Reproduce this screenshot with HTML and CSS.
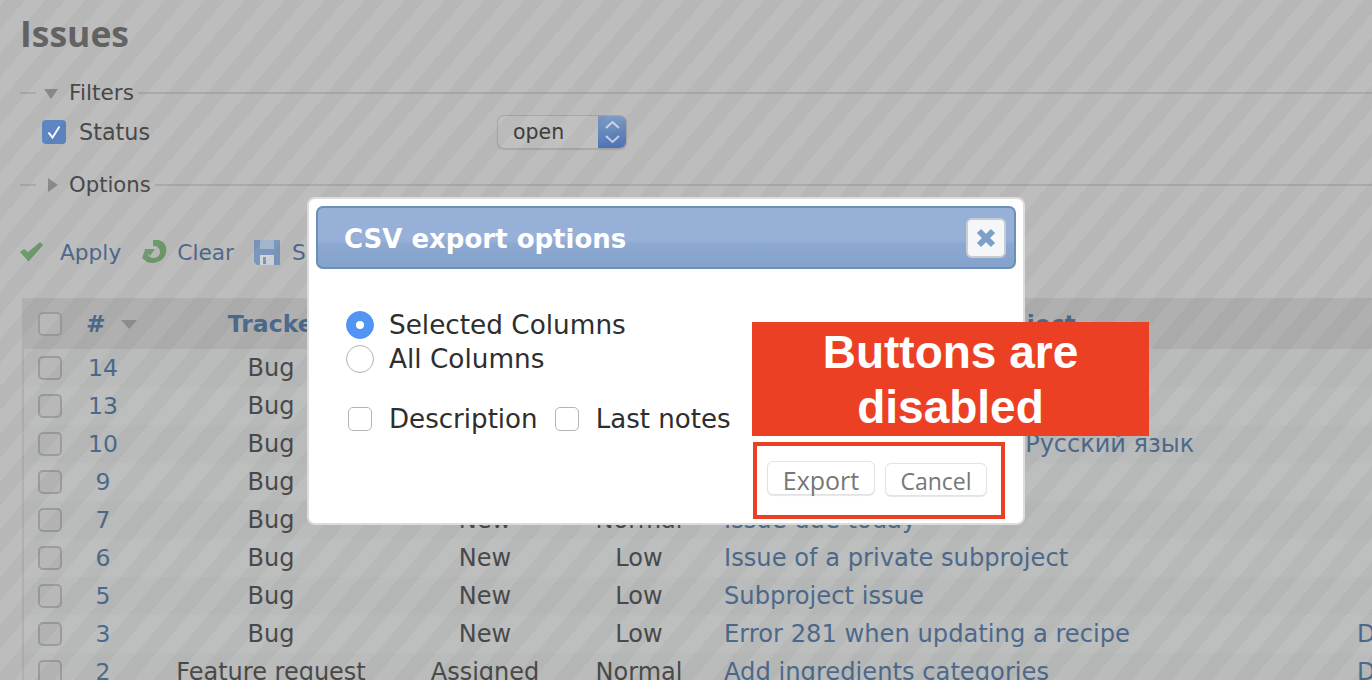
FILE: index.html
```html
<!DOCTYPE html>
<html lang="en">
<head>
<meta charset="utf-8">
<title>Issues</title>
<link rel="stylesheet" href="styles.css">
</head>
<body>
<main class="page">
  <h1 class="title">Issues</h1>
  <section class="fieldset filters">
    <div class="legend"><span class="arrow-down"></span><span>Filters</span></div>
    <div class="filter-row">
      <span class="check-on"><svg viewBox="0 0 24 24" width="24" height="24"><path d="M6.5 12.5l4 5 7-11" fill="none" stroke="#fff" stroke-width="2"/></svg></span>
      <span class="filter-name">Status</span>
      <span class="select"><span class="select-text">open</span><span class="select-btn"><svg viewBox="0 0 29 34" width="29" height="34"><path d="M8 13l6.500-6 6.500 6M8 21l6.500 6 6.500-6" fill="none" stroke="#c9d4e6" stroke-width="2"/></svg></span></span>
    </div>
  </section>
  <section class="fieldset options">
    <div class="legend"><span class="arrow-right"></span><span class="options-label">Options</span></div>
  </section>
  <nav class="actions">
    <span class="action"><svg class="ic-apply" viewBox="0 0 24 20" width="24" height="20"><path d="M0 10l4-3 4 3L20 0l3 3-14 16h-1z" fill="#6e9a6c"/></svg><a>Apply</a></span>
    <span class="action"><svg class="ic-clear" viewBox="0 0 26 26" width="26" height="26"><path d="M12 1h6c7 2 8 9 7 13-2 8-11 12-19 9l-5-4 3-8 3 2c-1 3 2 6 5 6 4 0 7-2 7-6s-3-6-7-6z" fill="#6f9a6d"/><path d="M3 10h11l-5 7z" fill="#6f9a6d"/></svg><a>Clear</a></span>
    <span class="action"><svg class="ic-save" viewBox="0 0 26 26" width="26" height="26"><path d="M0 1h26v25H3l-3-3z" fill="#7c97bc"/><path d="M6 1h14v9H6z" fill="#a4b6ce"/><path d="M6 16h14v10H6z" fill="#d2d6da"/><path d="M9 18h3v7H9z" fill="#7c97bc"/></svg><a>Save</a></span>
  </nav>
  <table class="issues">
    <thead>
      <tr><th class="c-check"><span class="box"></span></th><th class="c-id"><a>#</a><span class="sort"></span></th><th class="c-tracker"><a>Tracker</a></th><th class="c-status"><a>Status</a></th><th class="c-prio"><a>Priority</a></th><th class="c-subject"><a>Subject</a></th><th class="c-user"></th></tr>
    </thead>
    <tbody>
      <tr><td class="c-check"><span class="box"></span></td><td class="c-id"><a>14</a></td><td class="c-tracker">Bug</td><td class="c-status">New</td><td class="c-prio">Normal</td><td class="c-subject"><a>Issue with a recipe</a></td><td class="c-user"></td></tr>
      <tr><td class="c-check"><span class="box"></span></td><td class="c-id"><a>13</a></td><td class="c-tracker">Bug</td><td class="c-status">New</td><td class="c-prio">Normal</td><td class="c-subject"><a>Subproject issue two</a></td><td class="c-user"></td></tr>
      <tr><td class="c-check"><span class="box"></span></td><td class="c-id"><a>10</a></td><td class="c-tracker">Bug</td><td class="c-status">New</td><td class="c-prio">Normal</td><td class="c-subject subject-ru"><a>Issue with the encoding: Русский язык</a></td><td class="c-user"></td></tr>
      <tr><td class="c-check"><span class="box"></span></td><td class="c-id"><a>9</a></td><td class="c-tracker">Bug</td><td class="c-status">New</td><td class="c-prio">Normal</td><td class="c-subject"><a>Blocked issue</a></td><td class="c-user"></td></tr>
      <tr><td class="c-check"><span class="box"></span></td><td class="c-id"><a>7</a></td><td class="c-tracker">Bug</td><td class="c-status">New</td><td class="c-prio">Normal</td><td class="c-subject"><a>Issue due today</a></td><td class="c-user"></td></tr>
      <tr><td class="c-check"><span class="box"></span></td><td class="c-id"><a>6</a></td><td class="c-tracker">Bug</td><td class="c-status">New</td><td class="c-prio">Low</td><td class="c-subject"><a>Issue of a private subproject</a></td><td class="c-user"></td></tr>
      <tr><td class="c-check"><span class="box"></span></td><td class="c-id"><a>5</a></td><td class="c-tracker">Bug</td><td class="c-status">New</td><td class="c-prio">Low</td><td class="c-subject"><a>Subproject issue</a></td><td class="c-user"></td></tr>
      <tr><td class="c-check"><span class="box"></span></td><td class="c-id"><a>3</a></td><td class="c-tracker">Bug</td><td class="c-status">New</td><td class="c-prio">Low</td><td class="c-subject"><a>Error 281 when updating a recipe</a></td><td class="c-user"><a>D</a></td></tr>
      <tr><td class="c-check"><span class="box"></span></td><td class="c-id"><a>2</a></td><td class="c-tracker">Feature request</td><td class="c-status">Assigned</td><td class="c-prio">Normal</td><td class="c-subject"><a>Add ingredients categories</a></td><td class="c-user"><a>D</a></td></tr>
    </tbody>
  </table>
</main>

<div class="stripes"></div>

<section class="dialog">
  <header class="dialog-bar">
    <h2 class="dialog-title">CSV export options</h2>
    <button class="close" type="button"><svg viewBox="0 0 20 20" width="20" height="20"><path d="M3 3l14 14M17 3L3 17" stroke="#7f9fcb" stroke-width="6" fill="none"/></svg></button>
  </header>
  <div class="dialog-body">
    <div class="radio-row"><span class="radio radio-on"><span class="dot"></span></span><span>Selected Columns</span></div>
    <div class="radio-row"><span class="radio"></span><span>All Columns</span></div>
    <div class="check-row">
      <span class="cbox"></span><span class="check-label">Description</span>
      <span class="cbox"></span><span>Last notes</span>
    </div>
    <div class="buttons">
      <span class="btn btn-export">Export</span>
      <span class="btn btn-cancel">Cancel</span>
    </div>
  </div>
</section>

<div class="callout">Buttons are<br>disabled</div>
<div class="callout-box"></div>
</body>
</html>
```
FILE: styles.css
```css
* { box-sizing: border-box; }
html, body { margin: 0; height: 100%; }
body {
  width: 1372px;
  height: 680px;
  overflow: hidden;
  position: relative;
  background: #bdbdbd;
  font-family: "DejaVu Sans", Verdana, sans-serif;
  font-size: 21.7px;
  color: #4a4a4a;
}
a { color: #4d6a8c; }
.page { width: 1372px; padding: 0 0 0 20px; }
.title {
  margin: 0;
  padding-top: 11px;
  height: 82px;
  font-family: "Open Sans", sans-serif;
  font-weight: 700;
  font-size: 35.500px;
  line-height: 45px;
  color: #646464;
}
.legend {
  display: flex;
  align-items: center;
  height: 22px;
  color: #4a4a4a;
  line-height: 22px;
}
.legend::before { content: ""; width: 16px; height: 2px; background: #aaaaaa; }
.legend::after { content: ""; flex: 1; height: 2px; background: #aaaaaa; margin-left: 4px; }
.options-label { font-size: 21.200px; }
.arrow-down {
  width: 0; height: 0; margin: 2px 11px 0 8px;
  border: 7px solid transparent; border-top: 10px solid #8c8c8c; border-bottom: 0;
}
.arrow-right {
  width: 0; height: 0; margin: 0 11px 0 12px;
  border: 7px solid transparent; border-left: 10px solid #8c8c8c; border-right: 0;
}
.filter-row { display: flex; align-items: center; height: 34px; margin-top: 11px; padding-left: 22px; }
.check-on {
  width: 24px; height: 24px; border-radius: 4px; background: #5e86c2; flex: none;
  display: flex;
}
.filter-name { margin-left: 13px; width: 418px; font-size: 22.300px; }
.select {
  width: 130px; height: 34px; display: flex; border: 1px solid #a6a6a6; border-radius: 7px;
  background: #c0c0c0; overflow: hidden; box-shadow: 0 1px 1px #a8a8a8;
}
.select-text { flex: 1; padding-left: 15px; line-height: 32px; font-size: 20.500px; color: #3e3e3e; }
.select-btn { width: 29px; flex: none; background: linear-gradient(#7f9cc4, #4f74b8); display: flex; margin: -1px -1px -1px 0; }
.options { margin-top: 25px; }
.actions { display: flex; align-items: center; height: 36px; margin-top: 38px; }
.action { display: flex; align-items: center; }
.ic-apply { margin-right: 16px; }
.action:nth-child(2) { margin-left: 20px; }
.action:nth-child(3) { margin-left: 20px; }
.ic-clear { margin-right: 10px; }
.ic-save { margin-right: 12px; }
.issues {
  border-collapse: separate;
  border-spacing: 0;
  table-layout: fixed;
  width: 1350px;
  margin: 28px 0 0 2px;
  border-left: 2px solid #b0b0b0;
  border-top: 2px solid #b0b0b0;
  font-size: 24px;
}
.issues th { height: 49px; padding: 0 0 2px; background: #b0b0b0; font-size: 23.500px; }
.issues td { height: 38px; padding: 0; text-align: center; overflow: hidden; }
.issues tbody tr:nth-child(odd) td { background: #babbbb; }
.issues tbody tr:nth-child(even) td { background: #bdbebe; }
.c-check { width: 52px; }
.c-id { width: 54px; }
.issues td.c-id { font-size: 23.500px; }
.issues th.c-id { text-align: left; padding-left: 10px; white-space: nowrap; }
.c-tracker { width: 282px; white-space: nowrap; }
.issues th.c-tracker { padding-left: 11px; }
.c-status { width: 146px; }
.c-prio { width: 162px; }
.issues td.c-subject { text-align: left; padding-left: 4px; font-size: 24.200px; }
.issues td.subject-ru { font-size: 24px; }
.issues th.c-subject { padding-right: 12px; }
.c-subject { width: 624px; white-space: nowrap; }
.c-user { width: 28px; white-space: nowrap; }
.issues td.c-user { text-align: left; padding-left: 13px; }
.box {
  display: block; width: 24px; height: 24px; margin-left: 14px;
  border: 2px solid #9c9c9c; border-radius: 5px; background: #b8b8b8;
}
.sort {
  display: inline-block; width: 0; height: 0; margin-left: 15px; vertical-align: 3px;
  border: 8px solid transparent; border-top: 9px solid #8c8c8c; border-bottom: 0;
}
.stripes {
  position: absolute; inset: 0; pointer-events: none;
  background: repeating-linear-gradient(-50deg, rgba(0,0,0,.033) 0 15.300px, rgba(255,255,255,0) 15.300px 30.600px);
}
.dialog {
  position: absolute; left: 307px; top: 197px; width: 718px; height: 328px;
  background: #fff; border-radius: 8px; border: 2px solid #dcdcdc; padding: 7px 7px 0;
  color: #2e2e2e;
  font-size: 26.100px;
}
.dialog-bar {
  height: 63px; display: flex; align-items: center; justify-content: space-between;
  padding: 0 8px 0 26px; border: 2px solid #6a8fb9; border-radius: 7px;
  background: linear-gradient(#96b0d8 0 55%, #8ca8d0 62%, #84a2cc);
}
.dialog-title { margin: 0 0 -2px; color: #fff; font-size: 26px; font-weight: 700; }
.close {
  width: 40px; height: 40px; padding: 0; display: flex; align-items: center; justify-content: center;
  background: #f5f6f8; border: 2px solid #c8cdd2; border-radius: 6px;
}
.dialog-body { padding: 39px 0 0 30px; }
.radio-row { display: flex; align-items: center; height: 34px; font-size: 26.300px; }
.radio {
  width: 28px; height: 28px; border-radius: 50%; border: 1px solid #b4b4b4; background: #fff;
  margin-right: 15px; flex: none; display: flex; align-items: center; justify-content: center;
}
.radio-on { background: #5095f4; border-color: #5095f4; }
.dot { width: 8px; height: 8px; border-radius: 50%; background: #fff; }
.check-row { display: flex; align-items: center; height: 34px; margin-top: 26px; padding-left: 2px; }
.cbox { width: 24px; height: 24px; border: 1px solid #b4b4b4; border-radius: 5px; flex: none; margin-right: 17px; }
.check-label { margin-right: 17px; }
.buttons { display: flex; align-items: flex-start; margin-top: 25px; padding-left: 421px; }
.btn {
  background: #fff; border: 1px solid #e2e2e2; border-radius: 6px; color: #777777;
  box-shadow: 0 1px 1px #e6e6e6; text-align: center;
}
.btn-export { width: 108px; height: 34px; line-height: 36px; font-family: "Open Sans", sans-serif; font-size: 25px; }
.btn-cancel { width: 102px; height: 33px; margin: 2px 0 0 10px; line-height: 35px; font-family: "Open Sans", sans-serif; font-size: 23px; }
.callout {
  position: absolute; left: 752px; top: 322px; width: 397px; height: 114px;
  background: #ec4024; color: #fff; text-align: center;
  font-family: "Liberation Sans", Arial, sans-serif; font-weight: 700; font-size: 46px; line-height: 55px;
  padding-top: 3px;
}
.callout-box {
  position: absolute; left: 753px; top: 442px; width: 252px; height: 77px; border: 4px solid #ec4024;
}
```
